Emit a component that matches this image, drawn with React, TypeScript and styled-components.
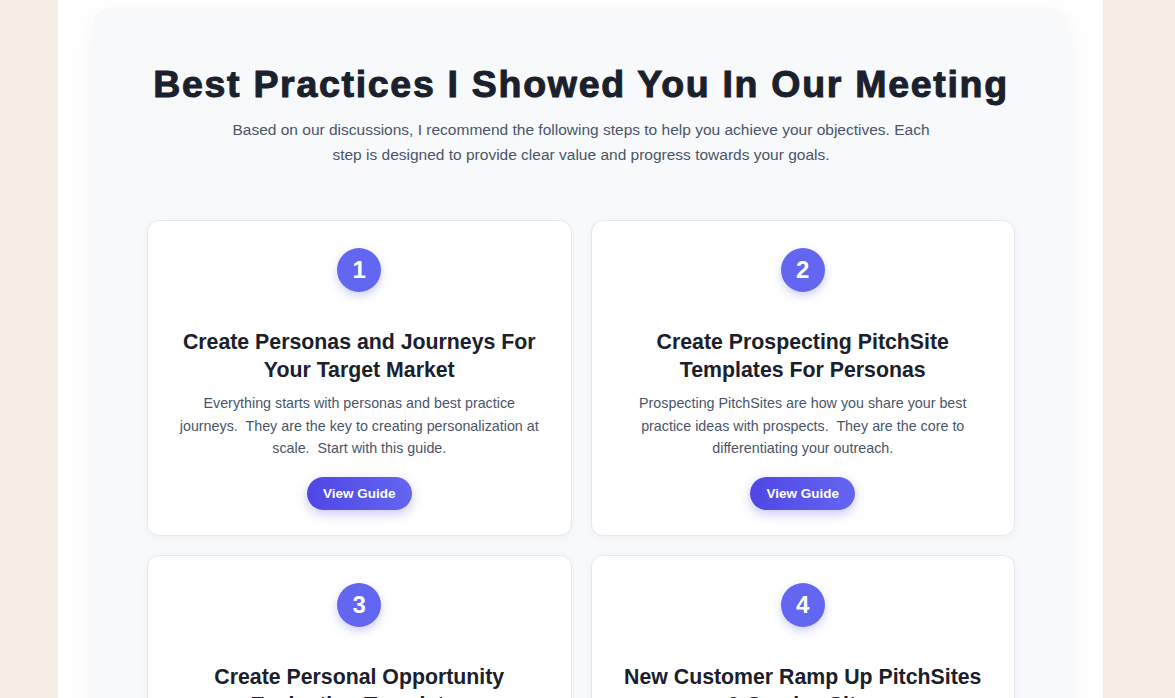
import { FC } from 'react';
import styled, { createGlobalStyle } from 'styled-components';

const GlobalStyle = createGlobalStyle`
  html, body {
    margin: 0;
    padding: 0;
    background: #f5eee5;
    font-family: 'Liberation Sans', Arial, sans-serif;
  }
  * {
    box-sizing: border-box;
  }
`;

const PageColumn = styled.div`
  width: 1045px;
  margin: 0 0 0 58px;
  min-height: 100vh;
  background: #ffffff;
  padding: 8px 35px 40px 36px;
`;

const Panel = styled.section`
  background: #f8f9fb;
  border-radius: 16px;
  box-shadow: 0 10px 30px rgba(15, 23, 42, 0.06);
  padding: 54px 53px 40px 53px;
`;

const Header = styled.header`
  display: flex;
  flex-direction: column;
  align-items: center;
  text-align: center;
  margin-bottom: 53px;
`;

const Title = styled.h1`
  margin: 0 0 11px;
  font-size: 37.5px;
  line-height: 44px;
  font-weight: 800;
  color: #1a202c;
  letter-spacing: 1.7px;
  -webkit-text-stroke: 1px #1a202c;
`;

const Intro = styled.p`
  margin: 0;
  max-width: 710px;
  font-size: 15.5px;
  line-height: 25px;
  color: #4a5568;
`;

const Grid = styled.div`
  display: grid;
  grid-template-columns: repeat(2, 1fr);
  gap: 19px;
`;

const Card = styled.article`
  display: flex;
  flex-direction: column;
  align-items: center;
  text-align: center;
  background: #ffffff;
  border: 1px solid #e6e8ec;
  border-radius: 12px;
  box-shadow: 0 2px 8px rgba(15, 23, 42, 0.04);
  padding: 27px 28px 25px;
`;

const StepNumber = styled.div`
  width: 44px;
  height: 44px;
  border-radius: 50%;
  background: #6366f1;
  color: #ffffff;
  display: flex;
  align-items: center;
  justify-content: center;
  font-size: 24px;
  font-weight: 700;
  box-shadow: 0 4px 10px rgba(99, 102, 241, 0.3);
  margin-bottom: 36px;
`;

const CardTitle = styled.h2`
  margin: 0 0 8px;
  font-size: 21.3px;
  line-height: 28px;
  font-weight: 700;
  color: #1a202c;
`;

const CardText = styled.p`
  margin: 0 0 17px;
  font-size: 14.3px;
  line-height: 22.5px;
  color: #4a5568;
`;

const GuideButton = styled.button`
  border: none;
  cursor: pointer;
  height: 33px;
  padding: 0 16px;
  border-radius: 999px;
  background: linear-gradient(90deg, #4f46e5 0%, #6366f1 100%);
  color: #ffffff;
  font-family: inherit;
  font-size: 13.5px;
  font-weight: 700;
  box-shadow: 0 4px 12px rgba(79, 70, 229, 0.3);
`;

type Step = {
  title: string;
  text: string;
};

const steps: Step[] = [
  {
    title: 'Create Personas and Journeys For Your Target Market',
    text: 'Everything starts with personas and best practice journeys.\u00a0 They are the key to creating personalization at scale.\u00a0 Start with this guide.',
  },
  {
    title: 'Create Prospecting PitchSite Templates For Personas',
    text: 'Prospecting PitchSites are how you share your best practice ideas with prospects.\u00a0 They are the core to differentiating your outreach.',
  },
  {
    title: 'Create Personal Opportunity Evaluation Templates',
    text: 'Help your buyers evaluate their options with a personal opportunity site.\u00a0 Keep every stakeholder aligned.',
  },
  {
    title: 'New Customer Ramp Up PitchSites & Service Sites',
    text: 'Welcome new customers with a clear ramp up plan.\u00a0 Service sites keep them engaged after the sale.',
  },
];

const App: FC = () => (
  <>
    <GlobalStyle />
    <PageColumn>
      <Panel>
        <Header>
          <Title>Best Practices I Showed You In Our Meeting</Title>
          <Intro>
            Based on our discussions, I recommend the following steps to help you achieve your
            objectives. Each step is designed to provide clear value and progress towards your goals.
          </Intro>
        </Header>
        <Grid>
          {steps.map((step, i) => (
            <Card key={step.title}>
              <StepNumber>{i + 1}</StepNumber>
              <CardTitle>{step.title}</CardTitle>
              <CardText>{step.text}</CardText>
              <GuideButton>View Guide</GuideButton>
            </Card>
          ))}
        </Grid>
      </Panel>
    </PageColumn>
  </>
);

export default App;
